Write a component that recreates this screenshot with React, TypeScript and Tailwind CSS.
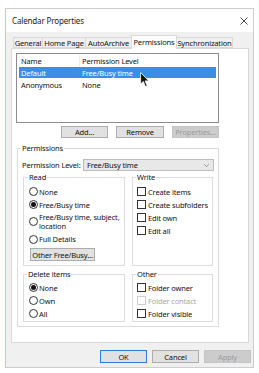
import React from "react";

function Radio({ checked = false }: { checked?: boolean }) {
  return (
    <span className="w-[9px] h-[9px] rounded-full border border-[#333] bg-white flex items-center justify-center shrink-0">
      {checked && <span className="w-[5px] h-[5px] rounded-full bg-[#111]" />}
    </span>
  );
}

function Check({ disabled = false }: { disabled?: boolean }) {
  return (
    <span
      className={
        "w-[9px] h-[9px] border bg-white shrink-0 " +
        (disabled ? "border-[#cfcfcf]" : "border-[#333]")
      }
    />
  );
}

function Btn({
  children,
  disabled = false,
  primary = false,
  w = "w-[47px]",
  h = "h-[12px]",
}: {
  children: React.ReactNode;
  disabled?: boolean;
  primary?: boolean;
  w?: string;
  h?: string;
}) {
  return (
    <div
      className={
        "flex items-center justify-center border " +
        w +
        " " +
        h +
        " " +
        (disabled
          ? "bg-[#cccccc] border-[#c4c4c4] text-[#9a9a9a]"
          : primary
          ? "bg-[#e1e1e1] border-[#2a7fd4]"
          : "bg-[#e1e1e1] border-[#adadad]")
      }
    >
      {children}
    </div>
  );
}

export default function App() {
  return (
    <div className="w-[259px] h-[373px] bg-white overflow-hidden pt-[8px] pl-[5px] font-['Noto_Sans',sans-serif] text-[7.5px] leading-[10px] text-[#111] tracking-[-0.15px]">
      <div className="w-[249px] h-[360px] border border-[#cdcdcd] border-l-[#b9d4b9] bg-[#f0f0f0] flex flex-col">
        {/* title bar */}
        <div className="h-[23px] bg-white flex items-center justify-between pl-[6px] pr-[5px]">
          <span className="text-[8px] text-[#222] mt-[1px]">Calendar Properties</span>
          <svg width="8" height="8" viewBox="0 0 8 8" className="mt-[1px]">
            <path d="M0.5 0.5 L7.5 7.5 M7.5 0.5 L0.5 7.5" stroke="#333" strokeWidth="0.9" fill="none" />
          </svg>
        </div>
        {/* body */}
        <div className="flex flex-col pl-[5px] pt-[3px]">
          {/* tabs */}
          <div className="flex items-start ml-[2px] -mb-px relative z-10">
            <div className="w-[30px] h-[11px] mt-[2px] border border-[#d9d9d9] bg-[#f0f0f0] flex items-center justify-center">General</div>
            <div className="w-[44px] h-[11px] mt-[2px] -ml-px border border-[#d9d9d9] bg-[#f0f0f0] flex items-center justify-center">Home Page</div>
            <div className="w-[47px] h-[11px] mt-[2px] -ml-px border border-[#d9d9d9] bg-[#f0f0f0] flex items-center justify-center">AutoArchive</div>
            <div className="w-[46px] h-[14px] -ml-px border border-b-0 border-[#d9d9d9] bg-white flex items-center justify-center pb-[1px]">Permissions</div>
            <div className="w-[57px] h-[11px] mt-[2px] -ml-px border border-[#d9d9d9] bg-[#f0f0f0] flex items-center justify-center">Synchronization</div>
          </div>
          {/* panel */}
          <div className="w-[238px] h-[295px] bg-white border border-[#d9d9d9] pl-[4px] pt-[4px] flex flex-col">
            {/* list */}
            <div className="w-[203px] h-[70px] border border-[#8c8c8c] pt-[1px] px-[2px] relative">
              <div className="flex h-[12px] items-center">
                <span className="w-[60px] pl-[2px]">Name</span>
                <span className="h-[12px] border-l border-[#ececec]" />
                <span className="pl-[2px]">Permission Level</span>
              </div>
              <div className="flex h-[11px] items-center bg-[#3b8ee8] text-white">
                <span className="w-[61px] pl-[2px]">Default</span>
                <span className="pl-[2px]">Free/Busy time</span>
              </div>
              <div className="flex h-[13px] items-center">
                <span className="w-[61px] pl-[2px]">Anonymous</span>
                <span className="pl-[2px]">None</span>
              </div>
              <svg
                width="10"
                height="16"
                viewBox="0 0 10 16"
                className="absolute left-[123px] top-[18px]"
              >
                <path
                  d="M0.6 0.6 L0.6 12 L3.3 9.4 L5.4 14.6 L7.2 13.8 L5.1 8.9 L8.8 8.9 Z"
                  fill="#111"
                  stroke="#fff"
                  strokeWidth="0.8"
                />
              </svg>
            </div>
            {/* buttons */}
            <div className="w-[203px] flex justify-end gap-[8px] mt-[3px]">
              <Btn>Add...</Btn>
              <Btn w="w-[48px]">Remove</Btn>
              <Btn disabled>Properties...</Btn>
            </div>
            {/* permissions group */}
            <fieldset className="mt-[5px] ml-[1px] w-[202px] border border-[#dcdcdc] px-[0px] pb-[4px]">
              <legend className="ml-[3px] px-[1px]">Permissions</legend>
              <div className="flex items-center mt-[6px] pl-[4px]">
                <span className="w-[61px]">Permission Level:</span>
                <div className="w-[131px] h-[12px] bg-[#e8e8e8] border border-[#bcbcbc] flex items-center justify-between pl-[3px] pr-[4px]">
                  <span>Free/Busy time</span>
                  <svg width="5" height="3" viewBox="0 0 5 3">
                    <path d="M0.3 0.3 L2.5 2.6 L4.7 0.3" stroke="#777" strokeWidth="0.7" fill="none" />
                  </svg>
                </div>
              </div>
              <div className="flex gap-[7px] ml-[5px] mt-[1px]">
                {/* Read */}
                <fieldset className="w-[102px] border border-[#dcdcdc] pl-[5px] pb-[4px]">
                  <legend className="ml-[-1px] px-[1px]">Read</legend>
                  <div className="flex flex-col pt-[3px]">
                    <div className="flex items-center h-[13px] gap-[1px]"><Radio /><span>None</span></div>
                    <div className="flex items-center h-[13px] gap-[1px]"><Radio checked /><span>Free/Busy time</span></div>
                    <div className="flex items-center h-[21px] gap-[1px]">
                      <Radio />
                      <span className="leading-[9px]">Free/Busy time, subject,<br />location</span>
                    </div>
                    <div className="flex items-center h-[14px] gap-[1px]"><Radio /><span>Full Details</span></div>
                    <div className="mt-[2px] ml-[1px]">
                      <Btn w="w-[65px]" h="h-[13px]">Other Free/Busy...</Btn>
                    </div>
                  </div>
                </fieldset>
                {/* Write */}
                <fieldset className="w-[81px] border border-[#dcdcdc] pl-[4px]">
                  <legend className="ml-[-1px] px-[1px]">Write</legend>
                  <div className="flex flex-col pt-[3px]">
                    <div className="flex items-center h-[13px] gap-[2px]"><Check /><span>Create items</span></div>
                    <div className="flex items-center h-[13px] gap-[2px]"><Check /><span>Create subfolders</span></div>
                    <div className="flex items-center h-[13px] gap-[2px]"><Check /><span>Edit own</span></div>
                    <div className="flex items-center h-[13px] gap-[2px]"><Check /><span>Edit all</span></div>
                  </div>
                </fieldset>
              </div>
              <div className="flex gap-[7px] ml-[5px] mt-[3px]">
                {/* Delete items */}
                <fieldset className="w-[102px] border border-[#dcdcdc] pl-[5px] pb-[1px]">
                  <legend className="ml-[-2px] px-[1px]">Delete items</legend>
                  <div className="flex flex-col pt-[2px]">
                    <div className="flex items-center h-[13px] gap-[1px]"><Radio checked /><span>None</span></div>
                    <div className="flex items-center h-[13px] gap-[1px]"><Radio /><span>Own</span></div>
                    <div className="flex items-center h-[13px] gap-[1px]"><Radio /><span>All</span></div>
                  </div>
                </fieldset>
                {/* Other */}
                <fieldset className="w-[81px] border border-[#dcdcdc] pl-[4px] pb-[1px]">
                  <legend className="ml-[-1px] px-[1px]">Other</legend>
                  <div className="flex flex-col pt-[2px]">
                    <div className="flex items-center h-[13px] gap-[2px]"><Check /><span>Folder owner</span></div>
                    <div className="flex items-center h-[13px] gap-[2px] text-[#a6a6a6]"><Check disabled /><span>Folder contact</span></div>
                    <div className="flex items-center h-[13px] gap-[2px]"><Check /><span>Folder visible</span></div>
                  </div>
                </fieldset>
              </div>
            </fieldset>
          </div>
          {/* bottom buttons */}
          <div className="flex justify-end gap-[5px] mt-[7px] pr-[2px]">
            <Btn primary h="h-[13px]">OK</Btn>
            <Btn h="h-[13px]">Cancel</Btn>
            <Btn disabled h="h-[13px]">Apply</Btn>
          </div>
        </div>
      </div>
    </div>
  );
}
